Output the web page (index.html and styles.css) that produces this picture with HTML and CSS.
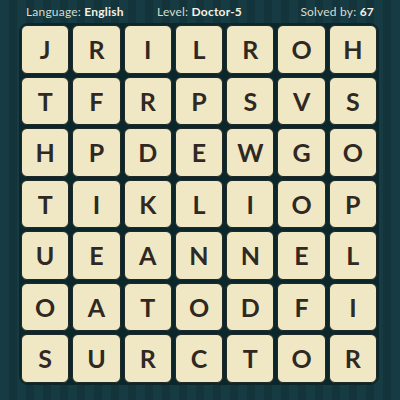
FILE: index.html
```html
<!DOCTYPE html>
<html lang="en">
<head>
  <meta charset="UTF-8" />
  <title>Word Puzzle</title>
  <link rel="stylesheet" href="styles.css">
</head>
<body>

  <header class="info">
    <span class="lang">Language: <b>English</b></span>
    <span class="level">Level: <b>Doctor-5</b></span>
    <span class="solved">Solved by: <b>67</b></span>
  </header>

  <main class="board">
    <div class="tile">J</div><div class="tile">R</div><div class="tile">I</div><div class="tile">L</div><div class="tile">R</div><div class="tile">O</div><div class="tile">H</div>
    <div class="tile">T</div><div class="tile">F</div><div class="tile">R</div><div class="tile">P</div><div class="tile">S</div><div class="tile">V</div><div class="tile">S</div>
    <div class="tile">H</div><div class="tile">P</div><div class="tile">D</div><div class="tile">E</div><div class="tile">W</div><div class="tile">G</div><div class="tile">O</div>
    <div class="tile">T</div><div class="tile">I</div><div class="tile">K</div><div class="tile">L</div><div class="tile">I</div><div class="tile">O</div><div class="tile">P</div>
    <div class="tile">U</div><div class="tile">E</div><div class="tile">A</div><div class="tile">N</div><div class="tile">N</div><div class="tile">E</div><div class="tile">L</div>
    <div class="tile">O</div><div class="tile">A</div><div class="tile">T</div><div class="tile">O</div><div class="tile">D</div><div class="tile">F</div><div class="tile">I</div>
    <div class="tile">S</div><div class="tile">U</div><div class="tile">R</div><div class="tile">C</div><div class="tile">T</div><div class="tile">O</div><div class="tile">R</div>
  </main>

</body>
</html>
```

FILE: styles.css
```css
* {
  box-sizing: border-box;
  margin: 0;
  padding: 0;
}
html, body {
  width: 400px;
  height: 400px;
  overflow: hidden;
}
body {
  background: repeating-linear-gradient(to right, #173b42 0, #173b42 9px, #12343a 9px, #12343a 17px);
  font-family: Lato, "Noto Sans", sans-serif;
}
.info {
  display: flex;
  align-items: center;
  height: 23px;
  padding: 0 26px 0 26px;
  color: #d9dccd;
  font-size: 12px;
  letter-spacing: 0.2px;
}
.info b {
  color: #f4f1e2;
  font-weight: 700;
}
.lang {
  width: 131px;
}
.level {
  flex: 1;
}
.board {
  display: grid;
  grid-template-columns: repeat(7, 1fr);
  gap: 3px;
  width: 360px;
  margin: 0 0 0 19px;
  padding: 2px;
  background: #0c272c;
  border-radius: 9px;
}
.tile {
  height: 48.5px;
  background: #f0e8c4;
  border: 1px solid #1f2a28;
  border-radius: 6px;
  display: flex;
  align-items: center;
  justify-content: center;
  color: #2f2823;
  font-size: 25px;
  font-weight: 700;
}
```
